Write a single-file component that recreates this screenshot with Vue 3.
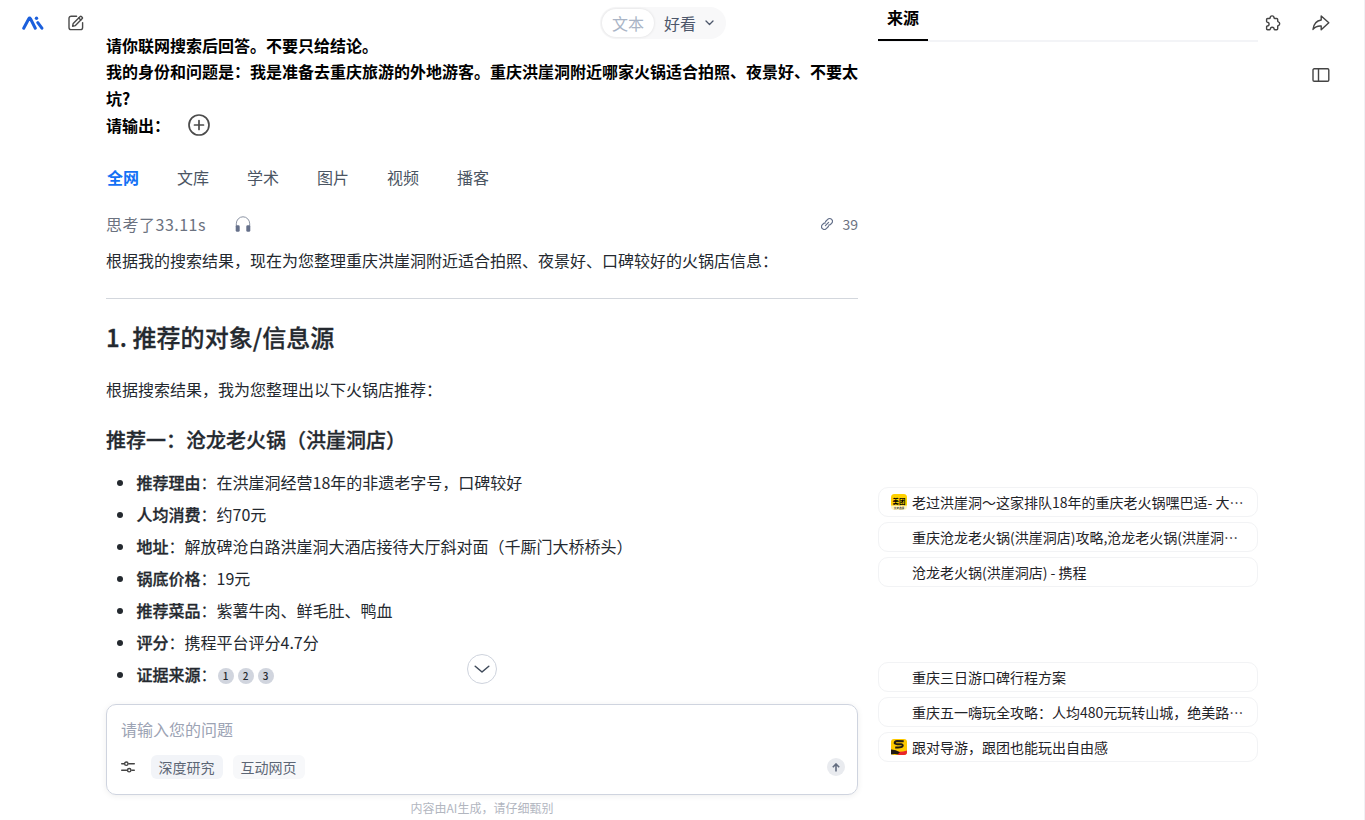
<template>
  <div class="page">
    <!-- 左侧 logo 和新建 -->
    <nav class="left-rail">
      <svg class="logo" width="22" height="14" viewBox="0 0 22 14" fill="none" stroke="#1b5fdc" stroke-width="3" stroke-linecap="round" stroke-linejoin="round">
        <path d="M1.7 12.2 6.8 2.8Q7.6 1.4 8.5 2.8L13.3 12.2" />
        <path d="M15.8 6.6 19.9 12.2" />
        <circle cx="14.5" cy="2.2" r="1.7" fill="#1b5fdc" stroke="none" />
      </svg>
      <svg class="edit" width="16" height="16" viewBox="0 0 16 16" fill="none" stroke="#4b4b4b" stroke-width="1.4" stroke-linecap="round" stroke-linejoin="round">
        <path d="M8.6 1.2H3.2a2.2 2.2 0 0 0-2.2 2.2v9a2.2 2.2 0 0 0 2.2 2.2h9.2a2.2 2.2 0 0 0 2.2-2.2V7.6" />
        <path d="M4.6 11.2 5.2 8.4 12.2 1.5q.6-.5 1.2 0l.9.9q.5.6 0 1.2L7.4 10.6z" />
        <path d="M10.8 3.1 12.8 5" />
      </svg>
    </nav>

    <main class="main">
      <h1 class="question">
        请你联网搜索后回答。不要只给结论。<br />我的身份和问题是：我是准备去重庆旅游的外地游客。重庆洪崖洞附近哪家火锅适合拍照、夜景好、不要太坑?<br />请输出：
        <svg class="plus" width="22" height="22" viewBox="0 0 22 22" fill="none" stroke="#4b4b4b" stroke-width="1.7" stroke-linecap="round">
          <circle cx="11" cy="11" r="10" />
          <path d="M11 6.5v9M6.5 11h9" />
        </svg>
      </h1>

      <div class="tabs">
        <button v-for="tab in tabs" :key="tab" :class="{ active: activeTab === tab }" @click="activeTab = tab">{{ tab }}</button>
      </div>

      <div class="meta">
        <span class="think">思考了33.11s</span>
        <svg class="headphone" width="16" height="17" viewBox="0 0 16 17">
          <path d="M1.3 11V7.8a6.5 6.8 0 0 1 13.4 0V11" fill="none" stroke="#8b93a3" stroke-width="1" />
          <rect x=".7" y="9.3" width="4" height="6.5" rx="1.4" fill="#65708a" />
          <rect x="11.3" y="9.3" width="4" height="6.5" rx="1.4" fill="#65708a" />
        </svg>
        <span class="count">
          <svg width="12" height="12" viewBox="0 0 12 12" fill="none" stroke="#64708a" stroke-width="1.2" stroke-linecap="round">
            <path d="M4.6 3.5 6.7 1.4a2.75 2.75 0 0 1 3.9 3.9L9.4 6.5q-.8.7-1.7.6" />
            <path d="M7.4 8.5 5.3 10.6a2.75 2.75 0 0 1-3.9-3.9L2.6 5.5q.8-.7 1.7-.6" />
            <path d="M4.4 7.6 7.6 4.4" />
          </svg>
          39
        </span>
      </div>

      <article class="answer">
        <p>根据我的搜索结果，现在为您整理重庆洪崖洞附近适合拍照、夜景好、口碑较好的火锅店信息：</p>
        <hr />
        <h2>1. 推荐的对象/信息源</h2>
        <p>根据搜索结果，我为您整理出以下火锅店推荐：</p>
        <h3>推荐一：沧龙老火锅（洪崖洞店）</h3>
        <ul>
          <li v-for="item in details" :key="item.label">
            <strong>{{ item.label }}</strong>：{{ item.text }}<span v-for="n in item.refs" :key="n" class="ref">{{ n }}</span>
          </li>
        </ul>
      </article>

      <div class="composer">
        <div class="placeholder">请输入您的问题</div>
        <div class="tools">
          <svg width="14" height="12" viewBox="0 0 14 12" fill="none" stroke="#444" stroke-width="1.4" stroke-linecap="round">
            <circle cx="5.3" cy="2.7" r="1.7" />
            <circle cx="8.2" cy="9.2" r="1.7" />
            <path d="M.7 2.7h2.2M7.8 2.7h5.5M.7 9.2h5M10.8 9.2h2.5" />
          </svg>
          <span class="chip">深度研究</span>
          <span class="chip light">互动网页</span>
          <button class="send">
            <svg width="8" height="9" viewBox="0 0 8 9" fill="none" stroke="#626c7f" stroke-width="1.6">
              <path d="M4 8.5V1M.8 4.2 4 1l3.2 3.2" />
            </svg>
          </button>
        </div>
      </div>
      <p class="notice">内容由AI生成，请仔细甄别</p>

      <!-- 回到底部 -->
      <button class="to-bottom">
        <svg width="16" height="9" viewBox="0 0 16 9" fill="none" stroke="#3e4959" stroke-width="1.5" stroke-linecap="round" stroke-linejoin="round">
          <path d="M1.2 1.2 8 7 14.8 1.2" />
        </svg>
      </button>
    </main>

    <aside class="sources">
      <div class="source-head"><span>来源</span></div>
      <div v-for="(group, i) in sources" :key="i" class="group">
        <div v-for="s in group" :key="s.title" class="source">
          <span class="favicon">
            <svg v-if="s.icon === 'meituan'" width="16" height="16" viewBox="0 0 16 16">
              <rect width="16" height="16" rx="3.5" fill="#fff3bd" />
              <path d="M0 11.5V3.5Q0 0 3.5 0h9Q16 0 16 3.5v8z" fill="#ffd100" />
              <text x="8" y="9.7" class="mt-name">美团</text>
              <text x="8" y="14.6" class="mt-sub">大众点评</text>
            </svg>
            <svg v-if="s.icon === 'sohu'" width="16" height="16" viewBox="0 0 16 16">
              <rect width="16" height="16" rx="3" fill="#fdc900" />
              <path d="M6 12.5Q10 13.4 16 11.5V13q0 3-3 3H7z" fill="#e9252b" />
              <path d="M0 10.6Q4.5 10.4 9 13.2L6.5 15.6Q4 14.5 0 15.6z" fill="#201a13" />
              <path d="M12.7 2.3 6.2 2Q3.6 2.3 3.7 4.2 4.2 5.6 10.3 5.3q2 .4 1.2 2Q10.4 9 4.2 8.4" fill="none" stroke="#201a13" stroke-width="2" />
            </svg>
          </span>
          <span class="title">{{ s.title }}</span>
        </div>
      </div>
    </aside>

    <div class="right-rail">
      <svg class="puzzle" width="16" height="16" viewBox="0 0 16 16" fill="none" stroke="#444" stroke-width="1.4" stroke-linejoin="round">
        <path d="M2.6 3.5H4.3q.7 0 .9-.7a1.9 1.9 0 0 1 3.8 0q.2.7.9.7h1.8q1 0 1 1V6q0 .7.7.9a1.9 1.9 0 0 1 0 3.6q-.7.2-.7.9v2.4q0 1-1 1H10q-.7 0-.9-.7a1.9 1.9 0 0 0-3.8 0q-.2.7-.9.7H2.6q-1 0-1-1v-2.2q0-.5.6-.6a1.9 1.9 0 0 0 0-3.8q-.6-.2-.6-.7V4.5q0-1 1-1z" />
      </svg>
      <svg class="share" width="18" height="16" viewBox="0 0 18 16" fill="none" stroke="#444" stroke-width="1.4" stroke-linejoin="round">
        <path d="M9.2 1 16.8 7.8 9.2 14.8V11Q4.2 10.5 1 14.4 2 6 9.2 5z" />
      </svg>
      <svg class="panel" width="18" height="14" viewBox="0 0 18 14" fill="none" stroke="#444" stroke-width="1.4">
        <rect x="1" y=".8" width="15.8" height="12.4" rx="1.2" />
        <path d="M6.5 1v12" />
      </svg>
    </div>

    <!-- 顶部模式切换 -->
    <div class="mode">
      <span class="on">文本</span>
      <span class="off">好看</span>
      <svg width="9" height="6" viewBox="0 0 9 6" fill="none" stroke="#4c566a" stroke-width="1.3" stroke-linecap="round" stroke-linejoin="round">
        <path d="M1 1l3.5 3.5L8 1" />
      </svg>
    </div>
  </div>
</template>

<script setup>
import { ref } from "vue";

const tabs = ["全网", "文库", "学术", "图片", "视频", "播客"];
const activeTab = ref("全网");

const details = [
  { label: "推荐理由", text: "在洪崖洞经营18年的非遗老字号，口碑较好" },
  { label: "人均消费", text: "约70元" },
  { label: "地址", text: "解放碑沧白路洪崖洞大酒店接待大厅斜对面（千厮门大桥桥头）" },
  { label: "锅底价格", text: "19元" },
  { label: "推荐菜品", text: "紫薯牛肉、鲜毛肚、鸭血" },
  { label: "评分", text: "携程平台评分4.7分" },
  { label: "证据来源", text: "", refs: [1, 2, 3] },
];

// 右侧来源，按回答段落分组
const sources = [
  [
    { title: "老过洪崖洞～这家排队18年的重庆老火锅嘿巴适- 大…", icon: "meituan" },
    { title: "重庆沧龙老火锅(洪崖洞店)攻略,沧龙老火锅(洪崖洞…" },
    { title: "沧龙老火锅(洪崖洞店) - 携程" },
  ],
  [
    { title: "重庆三日游口碑行程方案" },
    { title: "重庆五一嗨玩全攻略：人均480元玩转山城，绝美路…" },
    { title: "跟对导游，跟团也能玩出自由感", icon: "sohu" },
  ],
];
</script>

<style>
body {
  background: #fff;
}
</style>

<style scoped>
.page {
  position: relative;
  box-sizing: border-box;
  display: grid;
  grid-template-columns: 106px 752px 380px 1fr;
  width: 1365px;
  height: 820px;
  overflow: hidden;
  border-right: 1px solid #f0f1f5;
  font-family: "Noto Sans CJK SC", sans-serif;
  font-size: 16px;
  color: #24292f;
}
.page svg {
  flex: none;
  display: block;
}
h1,
h2,
h3,
p,
ul {
  margin: 0;
  padding: 0;
}
button {
  padding: 0;
  border: none;
  background: none;
  font: inherit;
  cursor: pointer;
}
.left-rail {
  display: flex;
  gap: 24px;
  align-items: flex-start;
  padding: 15px 0 0 22px;
}
.logo {
  margin-top: 1px;
}
.main {
  position: relative;
  display: flex;
  flex-direction: column;
  padding-top: 31.6px;
}
.question {
  height: 106.4px;
  font-size: 16px;
  font-weight: bold;
  line-height: 26.67px;
  color: #000;
}
.page .plus {
  display: inline-block;
  margin-left: 14.5px;
  vertical-align: -4px;
}
.tabs {
  display: flex;
  gap: 38px;
  margin-top: 27px;
  height: 24px;
  padding-left: 1px;
}
.tabs button {
  line-height: 24px;
  color: #4b5563;
}
.tabs .active {
  font-weight: bold;
  color: #1471f5;
}
.meta {
  display: flex;
  align-items: center;
  height: 24px;
  margin-top: 23px;
  color: #6b7280;
}
.think {
  letter-spacing: 0.5px;
}
.headphone {
  margin: 1px 0 0 29px;
}
.count {
  display: flex;
  align-items: center;
  gap: 9px;
  margin-left: auto;
  font-size: 14px;
}
.answer {
  flex: 1;
  padding-top: 12px;
}
.answer p {
  line-height: 24px;
}
hr {
  height: 1px;
  margin: 26px 0 20px;
  border: none;
  background: #d3d7dd;
}
/* 介于 Medium 和 Bold 之间的字重 */
h2,
h3,
strong {
  font-weight: 500;
  -webkit-text-stroke: 0.3px #24292f;
}
h2 {
  margin-bottom: 22px;
  font-size: 24px;
  line-height: 36px;
  letter-spacing: 0.07px;
}
h3 {
  margin: 24px 0 11px;
  font-size: 20px;
  line-height: 30px;
}
ul {
  list-style: none;
}
li {
  display: flex;
  align-items: center;
  height: 32px;
}
li::before {
  content: "";
  width: 6px;
  height: 6px;
  margin: 2px 13.5px 0 11px;
  border-radius: 50%;
  background: #24292f;
}
.ref {
  width: 16px;
  height: 16px;
  margin: 4px 4px 0 0;
  border-radius: 50%;
  background: #d1d5de;
  font-size: 10px;
  font-weight: 500;
  line-height: 15px;
  text-align: center;
}
strong + .ref {
  margin-left: 1px;
}
.composer {
  box-sizing: border-box;
  height: 91px;
  padding: 12px 12px 0 14px;
  border: 1px solid #cfd4df;
  border-radius: 10px;
  box-shadow: 0 1px 6px rgba(0, 0, 0, 0.07);
}
.placeholder {
  line-height: 24px;
  color: #9ca3b4;
}
.tools {
  display: flex;
  align-items: center;
  margin-top: 14px;
}
.chip {
  height: 24px;
  margin-left: 16px;
  padding: 0 8.5px 0 7.5px;
  border-radius: 6px;
  background: #f2f4f8;
  font-size: 14px;
  line-height: 24px;
  color: #5c6675;
}
.chip.light {
  margin-left: 10px;
  background: #f7f8fa;
}
.send {
  display: flex;
  align-items: center;
  justify-content: center;
  width: 18px;
  height: 18px;
  margin-left: auto;
  border-radius: 50%;
  background: #e9ebef;
}
.notice {
  height: 25px;
  font-size: 12px;
  line-height: 25px;
  text-align: center;
  color: #b2b6bf;
}
.to-bottom {
  position: absolute;
  left: 361px;
  top: 654px;
  display: flex;
  align-items: center;
  justify-content: center;
  box-sizing: border-box;
  width: 30px;
  height: 30px;
  border: 1px solid #ced3dd;
  border-radius: 50%;
  background: #fff;
}
.sources {
  margin-left: 20px;
  margin-right: -20px;
}
.source-head {
  box-sizing: border-box;
  height: 42px;
  border-bottom: 2px solid #f3f4f7;
}
.source-head span {
  display: block;
  box-sizing: border-box;
  width: 50px;
  height: 41px;
  padding-top: 5px;
  border-bottom: 2px solid #000;
  font-weight: bold;
  line-height: 24px;
  text-align: center;
  color: #000;
}
.group {
  display: flex;
  flex-direction: column;
  gap: 5px;
  margin-top: 75px;
}
.source-head + .group {
  margin-top: 445px;
}
.source {
  display: flex;
  align-items: center;
  box-sizing: border-box;
  height: 30px;
  padding: 0 12px;
  border: 1px solid #f2f3f5;
  border-radius: 10px;
  font-size: 14px;
  color: #1f2328;
}
.favicon {
  flex: none;
  width: 16px;
  height: 16px;
  margin-right: 5px;
}
.title {
  white-space: nowrap;
}
.mt-name {
  font-size: 6.4px;
  font-weight: bold;
  text-anchor: middle;
}
.mt-sub {
  font-size: 2.6px;
  font-weight: bold;
  text-anchor: middle;
}
.right-rail {
  display: grid;
  grid-template-columns: 16px 18px;
  grid-template-rows: 16px 14px;
  gap: 37px 31.5px;
  padding: 15px 0 0 26.5px;
}
.panel {
  grid-column: 2;
}
.mode {
  position: absolute;
  left: 600px;
  top: 7px;
  display: flex;
  align-items: center;
  box-sizing: border-box;
  width: 126px;
  height: 32px;
  padding-left: 2px;
  border-radius: 16px;
  background: #f8f8f9;
}
.mode .on {
  width: 52px;
  height: 28px;
  border-radius: 14px;
  background: #fff;
  box-shadow: 0 0 3px rgba(0, 0, 0, 0.12);
  line-height: 29px;
  text-align: center;
  color: #a9b4c6;
}
.mode .off {
  margin: 0 9px 0 10px;
  line-height: 29px;
  color: #4c566a;
}
</style>
